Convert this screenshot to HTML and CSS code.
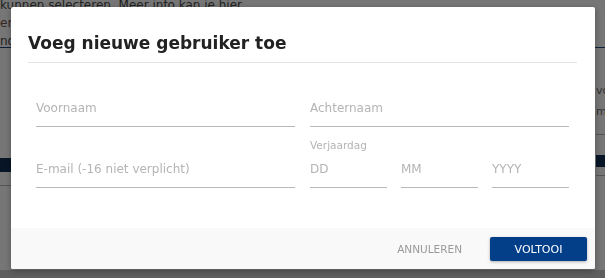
FILE: index.html
```html
<!DOCTYPE html>
<html lang="nl">
<head>
<meta charset="utf-8">
<link rel="stylesheet" href="styles.css">
</head>
<body>
<div class="page">
  <p class="bg-text first">kunnen selecteren. Meer info kan je hier</p>
  <p class="bg-text second">er</p>
  <p class="bg-text third">nd</p>
  <div class="bg-rule"></div>
  <div class="bg-cols">
    <div class="bg-left">
      <div class="bg-bar"></div>
      <div class="bg-line"></div>
    </div>
    <div class="bg-right">
      <p class="bg-text r1">vo</p>
      <p class="bg-text r2">m</p>
      <div class="bg-line r-line1"></div>
      <div class="bg-bar r-bar"></div>
      <div class="bg-line r-line2"></div>
    </div>
  </div>
  <div class="bg-bottom"></div>
</div>
<div class="overlay">
  <div class="modal">
    <div class="modal-header">
      <h2 class="modal-title">Voeg nieuwe gebruiker toe</h2>
    </div>
    <div class="modal-body">
      <div class="form-grid">
        <div class="field"><div class="input">Voornaam</div></div>
        <div class="field"><div class="input">Achternaam</div></div>
        <div class="field"><div class="input">E-mail (-16 niet verplicht)</div></div>
        <div class="field">
          <div class="label">Verjaardag</div>
          <div class="date-row">
            <div class="input">DD</div>
            <div class="input">MM</div>
            <div class="input">YYYY</div>
          </div>
        </div>
      </div>
    </div>
    <div class="modal-footer">
      <button class="btn-text">ANNULEREN</button>
      <button class="btn-primary">VOLTOOI</button>
    </div>
  </div>
</div>
</body>
</html>
```
FILE: styles.css
```css
* { box-sizing: border-box; }
html, body { margin: 0; padding: 0; }
body {
  width: 605px;
  height: 278px;
  overflow: hidden;
  font-family: "DejaVu Sans", sans-serif;
  background: #ececec;
}
.page {
  height: 278px;
  display: flex;
  flex-direction: column;
}
.bg-text {
  margin: 0;
  font-size: 12px;
  line-height: 18px;
  color: #444;
  white-space: nowrap;
}
.bg-text.first { margin-top: -4px; }
.bg-text.second { color: #6a4a40; }
.bg-rule { height: 1px; background: #1c3f6e; margin-top: -3px; }
.bg-cols { display: grid; grid-template-columns: 40px 1fr; }
.bg-left { padding-top: 110px; }
.bg-bar { height: 14px; background: #0f2a4d; }
.bg-line { height: 1px; background: #aaa; margin-top: 13px; }
.bg-right { padding-left: 556px; }
.bg-text.r1 { margin-top: 34px; color: #666; font-size: 11px; }
.bg-text.r2 { margin-top: 3px; color: #666; font-size: 11px; }
.bg-line.r-line1 { margin-top: 13px; }
.bg-bar.r-bar { margin-top: 20px; height: 12px; }
.bg-line.r-line2 { margin-top: 8px; }
.bg-bottom {
  margin-top: auto;
  height: 8px;
  background: #bcbcbc;
}

.overlay {
  position: fixed;
  inset: 0;
  background: rgba(0, 0, 0, 0.5);
  padding: 7px 0 0 11px;
}
.modal {
  width: 584px;
  height: 262px;
  background: #fff;
  border-radius: 2px;
  box-shadow: 0 2px 6px rgba(0,0,0,0.3);
  display: flex;
  flex-direction: column;
  overflow: hidden;
}
.modal-header {
  margin: 0 18px 0 17px;
  padding: 24px 0 7px;
  border-bottom: 1px solid #e4e4e4;
}
.modal-title {
  margin: 0;
  font-size: 17px;
  line-height: 24px;
  font-weight: bold;
  color: #222;
}
.modal-body {
  flex: 1;
  padding: 36px 26px 0 25px;
}
.form-grid {
  display: grid;
  grid-template-columns: 1fr 1fr;
  column-gap: 15px;
  row-gap: 11px;
  align-items: end;
}
.input {
  height: 28px;
  padding-bottom: 9px;
  border-bottom: 1px solid #b8b8b8;
  font-size: 12px;
  line-height: 18px;
  color: #b4b4b4;
  white-space: nowrap;
}
.label {
  font-size: 10.5px;
  line-height: 14px;
  color: #b4b4b4;
  margin-bottom: 8px;
}
.date-row {
  display: grid;
  grid-template-columns: 1fr 1fr 1fr;
  column-gap: 14px;
}
.modal-footer {
  height: 41px;
  background: #f9f9f9;
  display: flex;
  justify-content: flex-end;
  align-items: flex-start;
  padding: 9px 8px 0 0;
  gap: 28px;
}
.btn-text, .btn-primary {
  font-family: "DejaVu Sans", sans-serif;
  border: 0;
  padding: 0;
  height: 24px;
  cursor: pointer;
}
.btn-text {
  font-size: 10.5px;
  background: transparent;
  color: #9a9a9a;
}
.btn-primary {
  font-size: 11px;
  width: 97px;
  background: #033f88;
  color: #fff;
  border-radius: 2px;
  box-shadow: 0 1px 3px rgba(0,0,0,0.3);
}
```
